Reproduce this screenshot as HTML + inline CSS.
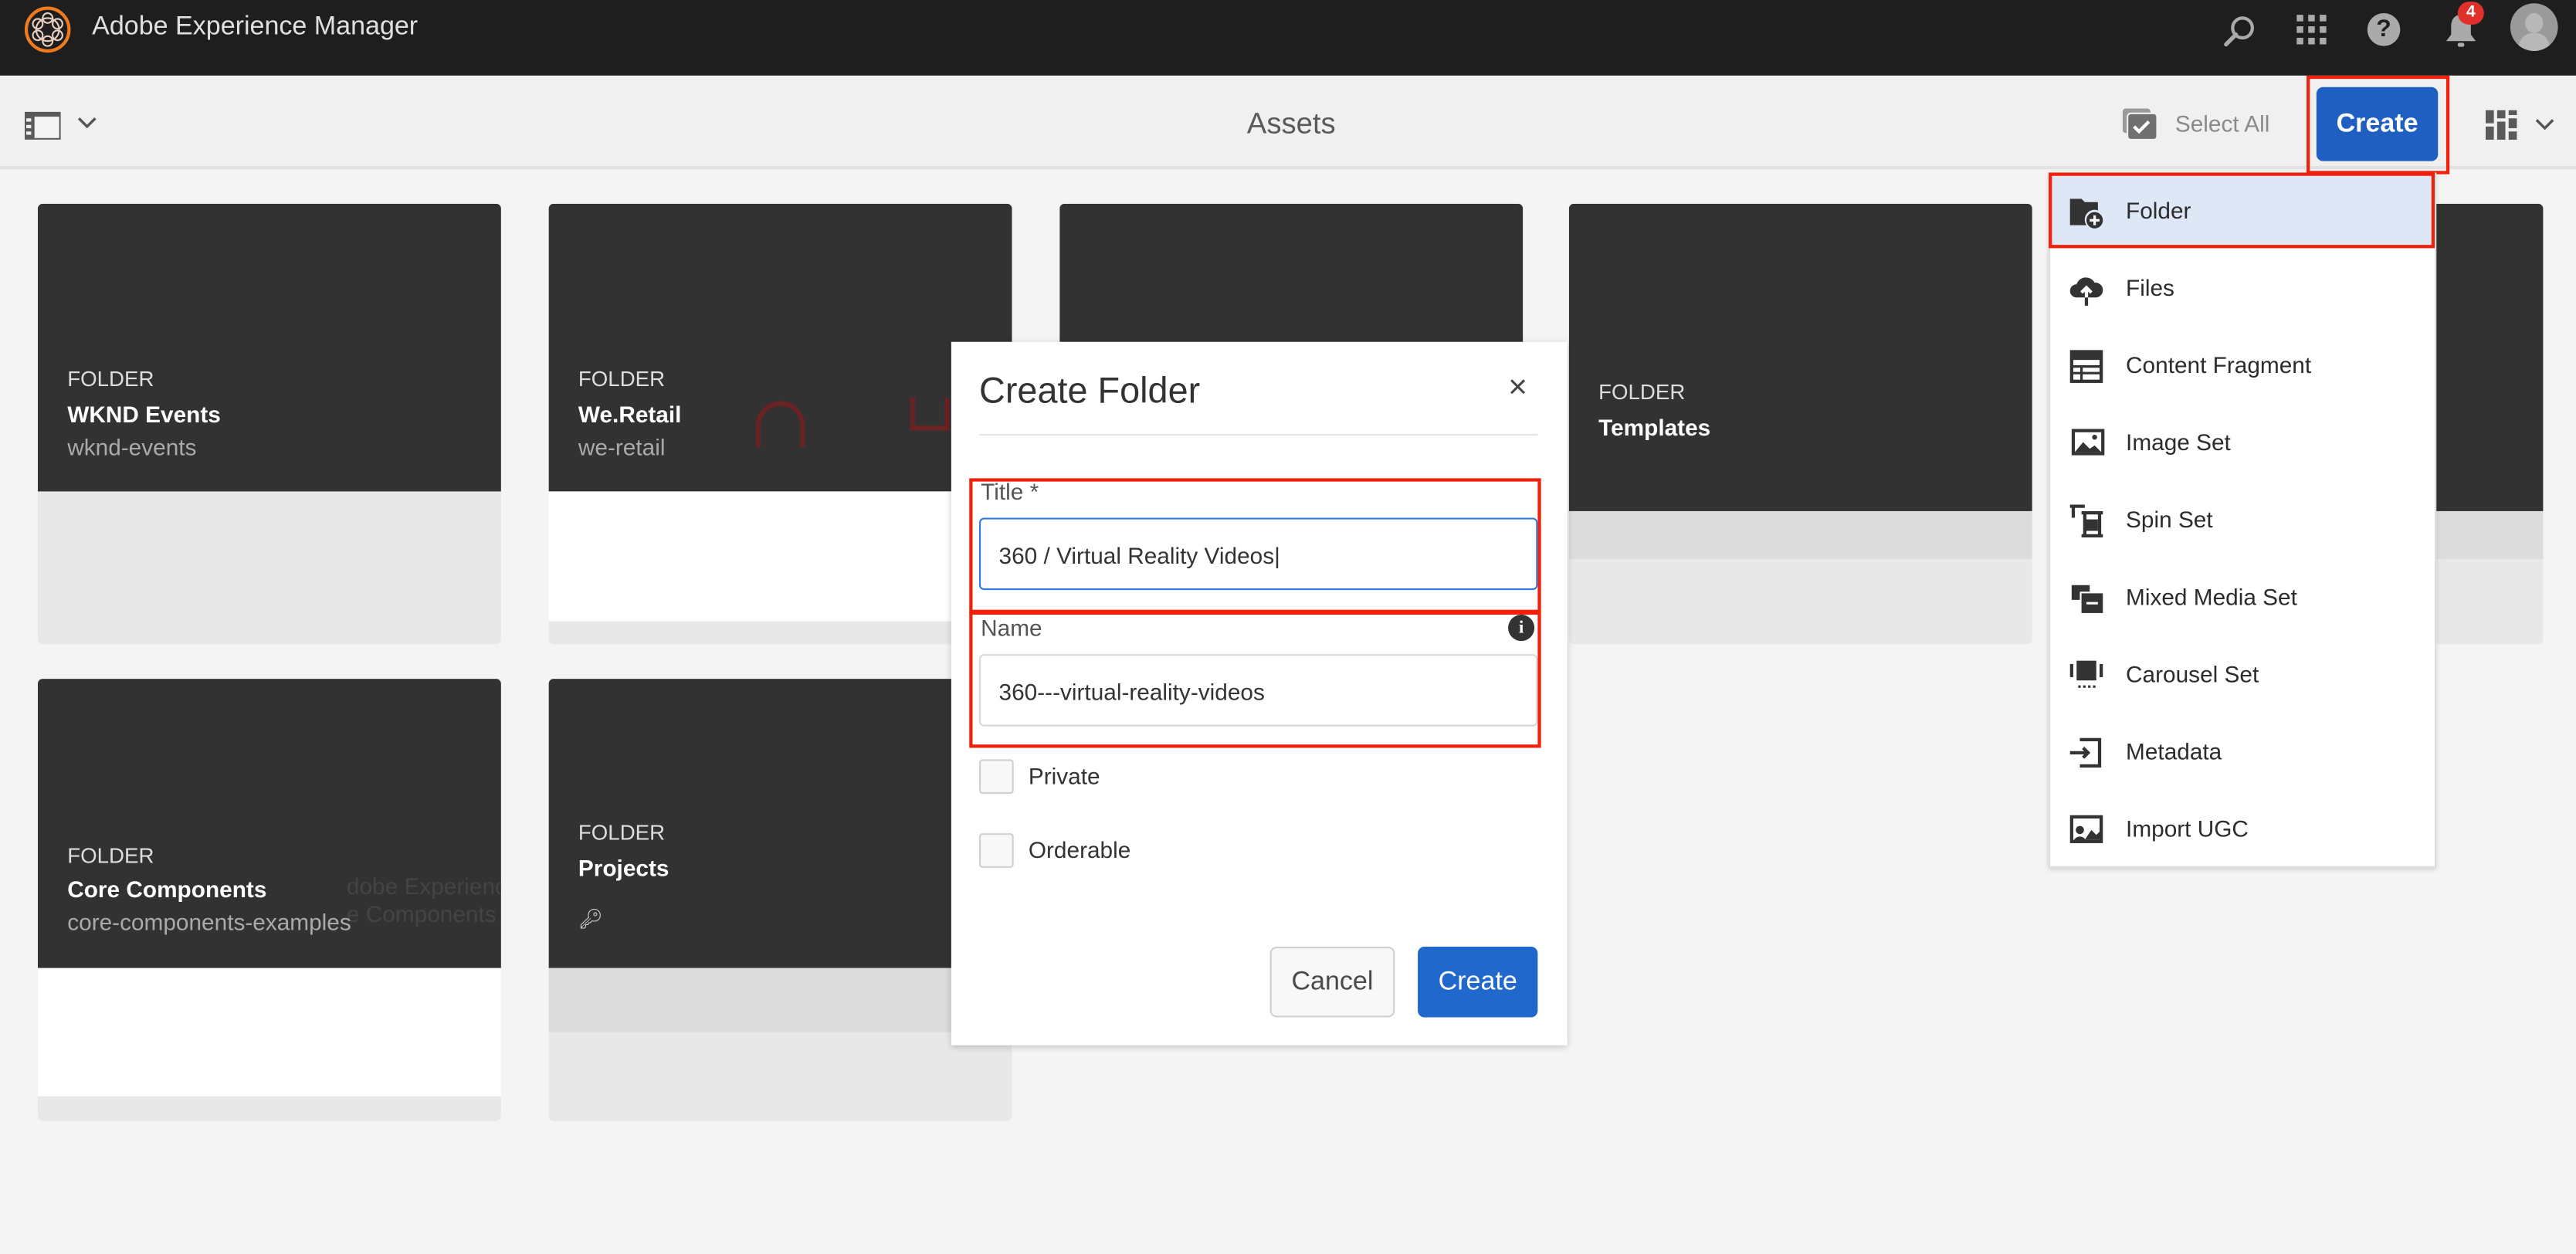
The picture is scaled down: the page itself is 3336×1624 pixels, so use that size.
<!DOCTYPE html>
<html><head><meta charset="utf-8"><style>
*{box-sizing:border-box;margin:0;padding:0}
html,body{width:3336px;height:1624px;overflow:hidden;background:#f4f4f4;font-family:"Liberation Sans",sans-serif}
#s{width:1568px;height:763px;position:relative;transform:scale(2.12755,2.1285);transform-origin:0 0;background:#f4f4f4}
.a{position:absolute}
.top{left:0;top:0;width:1568px;height:46px;background:#1e1e1e}
.bar{left:0;top:46px;width:1568px;height:57px;background:#f0f0f0;border-bottom:2px solid #e2e2e2}
.card{position:absolute;width:282px;border-radius:3px;overflow:hidden;background:#e8e8e8}
.dk{background:#323232;position:absolute;left:0;top:0;width:282px}
.lbl{position:absolute;left:18px;color:#ddd;font-size:13px}
.ttl{position:absolute;left:18px;color:#fff;font-size:14px;font-weight:bold}
.sub{position:absolute;left:18px;color:#aaa;font-size:14px}
.mi{position:absolute;left:0;width:235px;height:47px;font-size:14px;color:#2c2c2c}
.mi span{position:absolute;left:47px;top:15px}
.mi svg{position:absolute;left:12px;top:13px}
.red{position:absolute;border:2px solid #f0200a}
</style></head><body><div id="s">
<div class="a top"></div>
<svg class="a" style="left:14px;top:3px" width="30" height="30" viewBox="0 0 30 30"><circle cx="15" cy="15" r="13" fill="none" stroke="#f07b1e" stroke-width="2"/><circle cx="15" cy="15" r="7" fill="none" stroke="#e8d0c0" stroke-width="1"/><circle cx="15" cy="8" r="3" fill="none" stroke="#e8d0c0"/><circle cx="15" cy="22" r="3" fill="none" stroke="#e8d0c0"/><circle cx="9" cy="11.5" r="3" fill="none" stroke="#e8d0c0"/><circle cx="21" cy="11.5" r="3" fill="none" stroke="#e8d0c0"/><circle cx="9" cy="18.5" r="3" fill="none" stroke="#e8d0c0"/><circle cx="21" cy="18.5" r="3" fill="none" stroke="#e8d0c0"/></svg>
<div class="a" style="left:56px;top:8px;color:#e0e0e0;font-size:16px">Adobe Experience Manager</div>
<svg class="a" style="left:1352px;top:8px" width="22" height="22" viewBox="0 0 22 22"><circle cx="13" cy="9" r="6" fill="none" stroke="#aaa" stroke-width="2"/><path d="M9 13L3 19" stroke="#aaa" stroke-width="2.5" stroke-linecap="round"/></svg>
<svg class="a" style="left:1397px;top:8px" width="20" height="20" viewBox="0 0 20 20" fill="#aaa"><rect x="1" y="1" width="4" height="4"/><rect x="8" y="1" width="4" height="4"/><rect x="15" y="1" width="4" height="4"/><rect x="1" y="8" width="4" height="4"/><rect x="8" y="8" width="4" height="4"/><rect x="15" y="8" width="4" height="4"/><rect x="1" y="15" width="4" height="4"/><rect x="8" y="15" width="4" height="4"/><rect x="15" y="15" width="4" height="4"/></svg>
<div class="a" style="left:1441px;top:8px;width:20px;height:20px;border-radius:50%;background:#aaa;color:#1e1e1e;font-weight:bold;font-size:15px;text-align:center;line-height:20px">?</div>
<svg class="a" style="left:1487px;top:7px" width="22" height="22" viewBox="0 0 22 22" fill="#aaa"><path d="M11 2C7 2 5 5 5 9v5l-3 4h18l-3-4V9c0-4-2-7-6-7z"/><rect x="9" y="19" width="4" height="2.5" rx="1"/></svg>
<div class="a" style="left:1496px;top:1px;width:16px;height:14px;border-radius:7px;background:#e0302a;color:#fff;font-size:10px;font-weight:bold;text-align:center;line-height:14px">4</div>
<div class="a" style="left:1528px;top:2px;width:29px;height:29px;border-radius:50%;background:#9a9a9a;overflow:hidden"><div class="a" style="left:9px;top:6px;width:11px;height:12px;border-radius:50%;background:#b8b8b8"></div><div class="a" style="left:5px;top:18px;width:19px;height:14px;border-radius:9px 9px 0 0;background:#b8b8b8"></div></div>
<div class="a bar"></div>
<svg class="a" style="left:15px;top:68px" width="22" height="17" viewBox="0 0 22 17"><rect x="0" y="0" width="22" height="17" fill="#5a5a5a"/><rect x="6" y="3" width="15" height="13" fill="#f4f4f4"/><rect x="1" y="4" width="3" height="2" fill="#eee"/><rect x="1" y="8" width="3" height="2" fill="#eee"/><rect x="1" y="12" width="3" height="2" fill="#eee"/></svg>
<svg class="a" style="left:47px;top:71px" width="12" height="8" viewBox="0 0 12 8"><path d="M1 1l5 5 5-5" fill="none" stroke="#555" stroke-width="1.6"/></svg>
<div class="a" style="left:0;top:65px;width:1572px;text-align:center;font-size:18px;color:#5a5a5a">Assets</div>
<svg class="a" style="left:1292px;top:66px" width="22" height="20" viewBox="0 0 22 20"><rect x="0" y="0" width="17" height="15" rx="2" fill="#9a9a9a"/><rect x="3" y="3" width="18" height="16" rx="2" fill="#707070" stroke="#f0f0f0" stroke-width="1"/><path d="M7 11l3 3 6-6" fill="none" stroke="#fff" stroke-width="2"/></svg>
<div class="a" style="left:1324px;top:67px;font-size:14px;color:#8a8a8a">Select All</div>
<div class="red" style="left:1404px;top:46px;width:87px;height:60px"></div>
<div class="a" style="left:1410px;top:53px;width:74px;height:45px;background:#1f5fc1;border-radius:4px;color:#fff;font-weight:bold;font-size:16px;text-align:center;line-height:45px">Create</div>
<svg class="a" style="left:1513px;top:67px" width="20" height="19" viewBox="0 0 20 19" fill="#5a5a5a"><rect x="0" y="0" width="5" height="8"/><rect x="7" y="0" width="5" height="5"/><rect x="14" y="0" width="5" height="3"/><rect x="0" y="10" width="5" height="8"/><rect x="7" y="7" width="5" height="11"/><rect x="14" y="5" width="5" height="6"/><rect x="14" y="13" width="5" height="5"/></svg>
<svg class="a" style="left:1543px;top:72px" width="12" height="8" viewBox="0 0 12 8"><path d="M1 1l5 5 5-5" fill="none" stroke="#555" stroke-width="1.6"/></svg>

<div class="card" style="left:23px;top:124px;height:268px"><div class="dk" style="height:175px"></div><div class="lbl" style="top:99px">FOLDER</div><div class="ttl" style="top:120px">WKND Events</div><div class="sub" style="top:140px">wknd-events</div></div>
<div class="card" style="left:334px;top:124px;height:268px"><div class="dk" style="height:175px"></div><div class="a" style="left:0;top:175px;width:282px;height:79px;background:#fff"></div><div class="lbl" style="top:99px">FOLDER</div><div class="ttl" style="top:120px">We.Retail</div><div class="sub" style="top:140px">we-retail</div>
<div class="a" style="left:126px;top:120px;width:30px;height:28px;border:3px solid #6a2323;border-bottom:none;border-radius:15px 15px 0 0"></div><div class="a" style="left:220px;top:118px;width:24px;height:20px;border:3px solid #6a2323;border-top:none"></div></div>
<div class="card" style="left:645px;top:124px;height:268px"><div class="dk" style="height:175px"></div></div>
<div class="card" style="left:955px;top:124px;height:268px"><div class="dk" style="height:187px"></div><div class="a" style="left:0;top:187px;width:282px;height:29px;background:#dcdcdc"></div><div class="lbl" style="top:107px">FOLDER</div><div class="ttl" style="top:128px">Templates</div></div>
<div class="card" style="left:1266px;top:124px;height:268px"><div class="dk" style="height:187px"></div><div class="a" style="left:0;top:187px;width:282px;height:29px;background:#dcdcdc"></div></div>
<div class="card" style="left:23px;top:413px;height:269px"><div class="dk" style="height:176px"></div><div class="a" style="left:0;top:176px;width:282px;height:78px;background:#fff"></div><div class="a" style="left:188px;top:118px;color:#444;font-size:14px;line-height:17px;white-space:nowrap">dobe Experience<br>e Components</div><div class="lbl" style="top:100px">FOLDER</div><div class="ttl" style="top:120px">Core Components</div><div class="sub" style="top:140px">core-components-examples</div></div>
<div class="card" style="left:334px;top:413px;height:269px"><div class="dk" style="height:176px"></div><div class="a" style="left:0;top:176px;width:282px;height:39px;background:#dcdcdc"></div><div class="lbl" style="top:86px">FOLDER</div><div class="ttl" style="top:107px">Projects</div><div class="a" style="left:18px;top:139px;color:#ddd;font-size:12px">&#x1F511;&#xFE0E;</div></div>

<div class="a" style="left:579px;top:208px;width:375px;height:428px;background:#fff;box-shadow:0 1px 4px rgba(0,0,0,.2)"></div>
<div class="a" style="left:596px;top:225px;font-size:22px;color:#333">Create Folder</div>
<div class="a" style="left:918px;top:225px;font-size:20px;color:#444">×</div>
<div class="a" style="left:596px;top:264px;width:340px;height:1px;background:#e4e4e4"></div>
<div class="a" style="left:597px;top:291px;font-size:14px;color:#555">Title *</div>
<div class="a" style="left:596px;top:315px;width:340px;height:44px;border:1px solid #2d7ae0;border-radius:3px;padding:14px 11px;font-size:14px;color:#333">360 / Virtual Reality Videos|</div>
<div class="red" style="left:590px;top:291px;width:348px;height:82px"></div>
<div class="a" style="left:597px;top:374px;font-size:14px;color:#555">Name</div>
<div class="a" style="left:918px;top:374px;width:16px;height:16px;border-radius:50%;background:#333;color:#fff;font-size:11px;font-weight:bold;text-align:center;line-height:16px;font-family:'Liberation Serif',serif">i</div>
<div class="a" style="left:596px;top:398px;width:340px;height:44px;border:1px solid #d8d8d8;border-radius:3px;padding:14px 11px;font-size:14px;color:#333">360---virtual-reality-videos</div>
<div class="red" style="left:590px;top:372px;width:348px;height:83px"></div>
<div class="a" style="left:596px;top:462px;width:21px;height:21px;border:1px solid #d0d0d0;background:#f8f8f8;border-radius:2px"></div>
<div class="a" style="left:626px;top:464px;font-size:14px;color:#333">Private</div>
<div class="a" style="left:596px;top:507px;width:21px;height:21px;border:1px solid #d0d0d0;background:#f8f8f8;border-radius:2px"></div>
<div class="a" style="left:626px;top:509px;font-size:14px;color:#333">Orderable</div>
<div class="a" style="left:773px;top:576px;width:76px;height:43px;border:1px solid #d0d0d0;border-radius:4px;background:#f8f8f8;color:#4a4a4a;font-size:16px;text-align:center;line-height:41px">Cancel</div>
<div class="a" style="left:863px;top:576px;width:73px;height:43px;border-radius:4px;background:#2068cc;color:#fff;font-size:16px;text-align:center;line-height:43px">Create</div>

<div class="a" style="left:1247px;top:105px;width:236px;height:423px;background:#fff;border:1px solid #ddd;box-shadow:0 1px 3px rgba(0,0,0,.15)"></div>
<div class="a" style="left:1248px;top:106px;width:234px;height:44px;background:#dde7f6"></div>
<div class="a" style="left:1247px;top:105px;width:236px;height:423px">
<div class="mi" style="top:0"><svg width="22" height="22" viewBox="0 0 22 22"><path d="M1 3h7l2 2h8v5a6 6 0 0 0-7 9H1z" fill="#333"/><circle cx="16" cy="16" r="5" fill="#333"/><path d="M16 13v6M13 16h6" stroke="#fff" stroke-width="1.5"/></svg><span>Folder</span></div>
<div class="mi" style="top:47px"><svg width="22" height="22" viewBox="0 0 22 22"><path d="M5 16a4 4 0 0 1 0-8 6 6 0 0 1 11-1 4 4 0 0 1 1 9z" fill="#333"/><path d="M11 20v-9M8 13l3-3 3 3" stroke="#fff" stroke-width="2" fill="none"/><path d="M11 16v5" stroke="#333" stroke-width="2"/></svg><span>Files</span></div>
<div class="mi" style="top:94px"><svg width="22" height="22" viewBox="0 0 22 22"><rect x="2" y="2" width="18" height="18" fill="none" stroke="#333" stroke-width="2"/><rect x="2" y="2" width="18" height="5" fill="#333"/><path d="M2 11h18M2 15h18M8 11v9" stroke="#333" stroke-width="1.5"/></svg><span>Content Fragment</span></div>
<div class="mi" style="top:141px"><svg width="22" height="22" viewBox="0 0 22 22"><rect x="3" y="3" width="18" height="14" fill="none" stroke="#333" stroke-width="2"/><path d="M4 16l5-6 4 4 3-2 4 4z" fill="#333"/><circle cx="16" cy="7" r="1.5" fill="#333"/></svg><span>Image Set</span></div>
<div class="mi" style="top:188px"><svg width="22" height="22" viewBox="0 0 22 22" fill="none" stroke="#333" stroke-width="2"><path d="M1 2h9M3 2v7M8 6h13M10 6v14M19 6v14M8 20h13"/><rect x="12" y="11" width="5" height="5" fill="#333"/></svg><span>Spin Set</span></div>
<div class="mi" style="top:235px"><svg width="22" height="22" viewBox="0 0 22 22"><path d="M2 3h11v4H7v5H2z" fill="#333"/><rect x="8" y="8" width="13" height="12" fill="#333"/><path d="M11 14h7" stroke="#fff" stroke-width="1.5"/></svg><span>Mixed Media Set</span></div>
<div class="mi" style="top:282px"><svg width="22" height="22" viewBox="0 0 22 22" fill="#333"><rect x="5" y="2" width="12" height="12"/><rect x="1" y="4" width="2" height="8"/><rect x="19" y="4" width="2" height="8"/><rect x="6" y="17" width="1.5" height="1.5"/><rect x="9" y="17" width="1.5" height="1.5"/><rect x="12" y="17" width="1.5" height="1.5"/><rect x="15" y="17" width="1.5" height="1.5"/></svg><span>Carousel Set</span></div>
<div class="mi" style="top:329px"><svg width="22" height="22" viewBox="0 0 22 22" fill="none" stroke="#333" stroke-width="2"><path d="M7 3h12v16H7M1 11h11M9 8l3 3-3 3"/></svg><span>Metadata</span></div>
<div class="mi" style="top:376px"><svg width="22" height="22" viewBox="0 0 22 22"><rect x="2" y="3" width="18" height="15" fill="none" stroke="#333" stroke-width="2"/><path d="M10 17l4-6 3 3 2-2v5z" fill="#333"/><circle cx="7" cy="11" r="2.5" fill="#333"/><path d="M3 19a4 4 0 0 1 8 0z" fill="#333"/></svg><span>Import UGC</span></div>
</div>
<div class="red" style="left:1247px;top:105px;width:235px;height:46px"></div>
</div></body></html>
